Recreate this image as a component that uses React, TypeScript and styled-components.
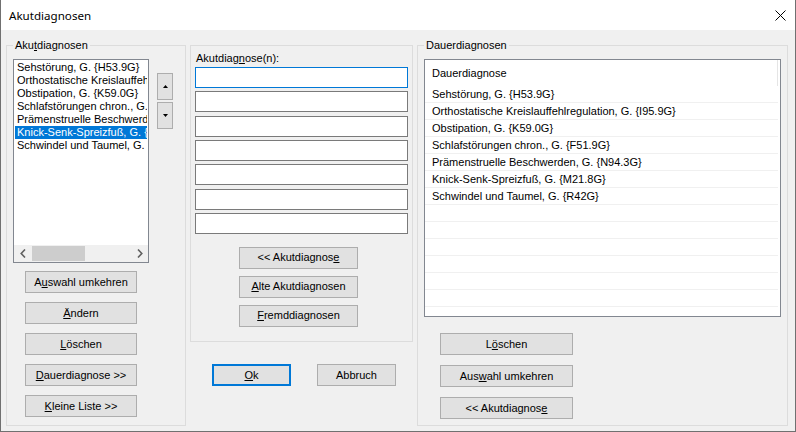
import React from 'react';
import styled, { createGlobalStyle } from 'styled-components';

const GlobalStyle = createGlobalStyle`
  html, body {
    margin: 0;
    padding: 0;
    background: #ffffff;
  }
  body {
    font-family: "Liberation Sans", Arial, sans-serif;
    font-size: 11px;
    color: #000000;
  }
  * {
    box-sizing: border-box;
  }
`;

const akut = [
  'Sehstörung, G. {H53.9G}',
  'Orthostatische Kreislauffehlregulation, G. {I95.9G}',
  'Obstipation, G. {K59.0G}',
  'Schlafstörungen chron., G. {F51.9G}',
  'Prämenstruelle Beschwerden, G. {N94.3G}',
  'Knick-Senk-Spreizfuß, G. {M21.8G}',
  'Schwindel und Taumel, G. {R42G}',
];

const Window = styled.div`
  width: 796px;
  height: 432px;
  display: flex;
  flex-direction: column;
  border: 1px solid #707070;
  border-top: none;
  background: #f0f0f0;
  overflow: hidden;
`;

const TitleBar = styled.div`
  height: 30px;
  flex: none;
  background: #ffffff;
  display: flex;
  align-items: center;
  justify-content: space-between;
  padding: 0 9px 0 8px;
`;

const Title = styled.span`
  font-family: "Noto Sans", "Open Sans", sans-serif;
  font-size: 11.6px;
  color: #000;
`;

const Body = styled.div`
  flex: 1;
  display: flex;
  align-items: flex-start;
  gap: 4px;
  padding: 15px 0 0 5px;
`;

const Group = styled.div<{ $w: number; $h: number }>`
  position: relative;
  flex: none;
  width: ${p => p.$w}px;
  height: ${p => p.$h}px;
  border: 1px solid #dcdcdc;
`;

const Legend = styled.span`
  position: absolute;
  top: -7px;
  left: 6px;
  padding: 0 2px;
  line-height: 13px;
  background: #f0f0f0;
`;

const Acc = styled.span`
  text-decoration: underline;
  text-underline-offset: 1px;
`;

/* ---- left group ---- */

const LeftInner = styled.div`
  padding: 13px 0 0 6px;
`;

const TopRow = styled.div`
  display: flex;
  align-items: flex-start;
`;

const ListBox = styled.div`
  width: 136px;
  height: 204px;
  border: 1px solid #828790;
  background: #ffffff;
  display: flex;
  flex-direction: column;
`;

const Items = styled.div`
  flex: 1;
  overflow: hidden;
  padding-top: 1px;
`;

const Item = styled.div<{ $sel?: boolean }>`
  height: 13px;
  line-height: 13px;
  margin: 0 1px 0 1px;
  padding-left: 2px;
  white-space: nowrap;
  overflow: hidden;
  background: ${p => (p.$sel ? '#0078d7' : 'transparent')};
  color: ${p => (p.$sel ? '#ffffff' : '#000000')};
`;

const HScroll = styled.div`
  height: 17px;
  flex: none;
  display: flex;
  align-items: stretch;
  background: #f0f0f0;
`;

const ScrollArrow = styled.div`
  width: 17px;
  flex: none;
  display: flex;
  align-items: center;
  justify-content: center;
`;

const Track = styled.div`
  flex: 1;
  display: flex;
  align-items: stretch;
  padding: 1px 0;
`;

const Thumb = styled.div`
  width: 53px;
  margin-left: 1px;
  background: #cdcdcd;
`;

const ArrowCol = styled.div`
  display: flex;
  flex-direction: column;
  gap: 2px;
  margin: 14px 0 0 8px;
`;

const SmallBtn = styled.div`
  width: 16px;
  height: 27px;
  border: 1px solid #adadad;
  background: #e1e1e1;
  display: flex;
  align-items: center;
  justify-content: center;
`;

const ButtonCol = styled.div<{ $gap: number; $top: number; $left: number }>`
  display: flex;
  flex-direction: column;
  align-items: flex-start;
  gap: ${p => p.$gap}px;
  margin: ${p => p.$top}px 0 0 ${p => p.$left}px;
`;

const Button = styled.div<{ $w: number; $default?: boolean }>`
  width: ${p => p.$w}px;
  height: 22px;
  flex: none;
  display: flex;
  align-items: center;
  justify-content: center;
  background: #e1e1e1;
  border: ${p => (p.$default ? '2px solid #0078d7' : '1px solid #adadad')};
  white-space: nowrap;
  line-height: 13px;
`;

/* ---- middle ---- */

const MiddleCol = styled.div`
  display: flex;
  flex-direction: column;
  width: 223px;
  flex: none;
`;

const MidInner = styled.div`
  padding: 6px 0 0 4px;
`;

const FieldLabel = styled.div`
  line-height: 13px;
  margin: 0 0 2px 1px;
`;

const Inputs = styled.div`
  display: flex;
  flex-direction: column;
  gap: 3.33px;
`;

const Input = styled.div<{ $focus?: boolean }>`
  width: 213px;
  height: 21px;
  background: #ffffff;
  border: 1px solid ${p => (p.$focus ? '#0078d7' : '#7a7a7a')};
`;

const OkRow = styled.div`
  display: flex;
  gap: 26px;
  margin: 22px 0 0 22px;
`;

/* ---- right ---- */

const ListView = styled.div`
  width: 357px;
  height: 258px;
  border: 1px solid #828790;
  background: #ffffff;
  overflow: hidden;
`;

const Header = styled.div`
  height: 26px;
  display: flex;
`;

const HeaderCell = styled.div`
  width: 353px;
  border-right: 1px solid #e5e5e5;
  padding-left: 7px;
  line-height: 26px;
`;

const Row = styled.div`
  height: 17px;
  margin-right: 2px;
  border-bottom: 1px solid #f0f0f0;
  padding-left: 7px;
  line-height: 16px;
  white-space: nowrap;
`;

const Tri = ({ up }: { up?: boolean }) => (
  <svg width="5" height="3" viewBox="0 0 5 3">
    <polygon points={up ? '2.5,0 5,3 0,3' : '0,0 5,0 2.5,3'} fill="#000" />
  </svg>
);

const Chevron = ({ left }: { left?: boolean }) => (
  <svg width="6" height="9" viewBox="0 0 6 9">
    <polyline
      points={left ? '5,0.5 1.2,4.5 5,8.5' : '1,0.5 4.8,4.5 1,8.5'}
      fill="none"
      stroke="#606060"
      strokeWidth="1.6"
    />
  </svg>
);

export default function App() {
  return (
    <>
      <GlobalStyle />
      <Window>
        <TitleBar>
          <Title>Akutdiagnosen</Title>
          <svg width="11" height="11" viewBox="0 0 11 11">
            <path d="M0.5 0.5 L10.5 10.5 M10.5 0.5 L0.5 10.5" stroke="#000" strokeWidth="1" />
          </svg>
        </TitleBar>
        <Body>
          <Group $w={180} $h={381}>
            <Legend>
              Aku<Acc>t</Acc>diagnosen
            </Legend>
            <LeftInner>
              <TopRow>
                <ListBox>
                  <Items>
                    {akut.map((a, i) => (
                      <Item key={a} $sel={i === 5}>
                        {a}
                      </Item>
                    ))}
                  </Items>
                  <HScroll>
                    <ScrollArrow>
                      <Chevron left />
                    </ScrollArrow>
                    <Track>
                      <Thumb />
                    </Track>
                    <ScrollArrow>
                      <Chevron />
                    </ScrollArrow>
                  </HScroll>
                </ListBox>
                <ArrowCol>
                  <SmallBtn>
                    <Tri up />
                  </SmallBtn>
                  <SmallBtn>
                    <Tri />
                  </SmallBtn>
                </ArrowCol>
              </TopRow>
              <ButtonCol $gap={9} $top={8} $left={12}>
                <Button $w={112}>
                  A<Acc>u</Acc>swahl umkehren
                </Button>
                <Button $w={112}>
                  <Acc>Ä</Acc>ndern
                </Button>
                <Button $w={112}>
                  <Acc>L</Acc>öschen
                </Button>
                <Button $w={112}>
                  <Acc>D</Acc>auerdiagnose &gt;&gt;
                </Button>
                <Button $w={112}>
                  <Acc>K</Acc>leine Liste &gt;&gt;
                </Button>
              </ButtonCol>
            </LeftInner>
          </Group>

          <MiddleCol>
            <Group $w={223} $h={297}>
              <MidInner>
                <FieldLabel>
                  Akutdiag<Acc>n</Acc>ose(n):
                </FieldLabel>
                <Inputs>
                  {[0, 1, 2, 3, 4, 5, 6].map(i => (
                    <Input key={i} $focus={i === 0} />
                  ))}
                </Inputs>
                <ButtonCol $gap={7} $top={13} $left={44}>
                  <Button $w={119}>
                    &lt;&lt; Akutdiagnos<Acc>e</Acc>
                  </Button>
                  <Button $w={119}>
                    <Acc>A</Acc>lte Akutdiagnosen
                  </Button>
                  <Button $w={119}>
                    <Acc>F</Acc>remddiagnosen
                  </Button>
                </ButtonCol>
              </MidInner>
            </Group>
            <OkRow>
              <Button $w={79} $default>
                <Acc>O</Acc>k
              </Button>
              <Button $w={79}>Abbruch</Button>
            </OkRow>
          </MiddleCol>

          <Group $w={371} $h={381}>
            <Legend>Dauerdiagnosen</Legend>
            <LeftInner>
              <ListView>
                <Header>
                  <HeaderCell>Dauerdiagnose</HeaderCell>
                </Header>
                {Array.from({ length: 14 }).map((_, i) => (
                  <Row key={i}>{akut[i] ?? ''}</Row>
                ))}
              </ListView>
              <ButtonCol $gap={10} $top={16} $left={16}>
                <Button $w={133}>
                  L<Acc>ö</Acc>schen
                </Button>
                <Button $w={133}>
                  Aus<Acc>w</Acc>ahl umkehren
                </Button>
                <Button $w={133}>
                  &lt;&lt; Akutdiagnos<Acc>e</Acc>
                </Button>
              </ButtonCol>
            </LeftInner>
          </Group>
        </Body>
      </Window>
    </>
  );
}
